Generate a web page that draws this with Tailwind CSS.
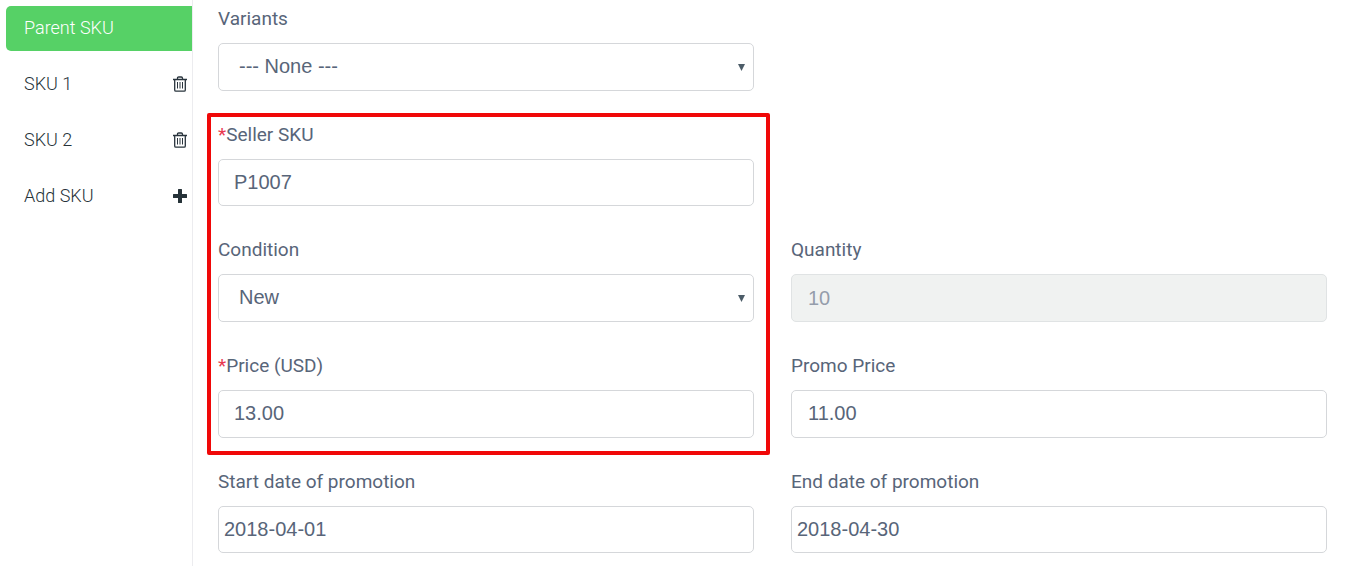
<!DOCTYPE html>
<html lang="en">
<head>
<meta charset="utf-8">
<meta name="viewport" content="width=device-width, initial-scale=1">
<title>SKU editor</title>
<script src="https://cdn.jsdelivr.net/npm/@tailwindcss/browser@4"></script>
</head>
<body class="flex min-h-screen bg-white font-['Roboto',sans-serif] text-[19px] leading-6 text-[#586579]">
<nav aria-label="SKUs" class="flex w-[193px] shrink-0 flex-col gap-[11px] border-r border-[#ececef] pt-1.5 pl-1.5 text-[18px] font-light text-[#263238]">
  <button type="button" class="flex h-[45px] items-center rounded-l-[5px] bg-[#56d166] pb-0.5 pl-[18px] text-white">Parent SKU</button>
  <div class="flex h-[45px] items-center justify-between pr-[5px] pb-0.5 pl-[18px]">
    <button type="button">SKU 1</button>
    <button type="button" aria-label="Delete SKU 1">
      <svg class="h-4 w-3.5" viewBox="0 0 14 16" fill="none" stroke="#29343d" stroke-width="1.3"><path d="M0 3.5H14M4.5 3.5V2.2Q4.5 1 5.7 1H8.3Q9.500 1 9.500 2.200V3.500M1.700 3.500V14Q1.700 15.200 2.900 15.200H11.100Q12.300 15.200 12.300 14V3.500"/><path d="M4.500 6V12.500M7 6V12.500M9.500 6V12.500" stroke-width="1"/></svg>
    </button>
  </div>
  <div class="flex h-[45px] items-center justify-between pr-[5px] pb-0.5 pl-[18px]">
    <button type="button">SKU 2</button>
    <button type="button" aria-label="Delete SKU 2">
      <svg class="h-4 w-3.5" viewBox="0 0 14 16" fill="none" stroke="#29343d" stroke-width="1.3"><path d="M0 3.5H14M4.5 3.5V2.2Q4.5 1 5.7 1H8.3Q9.500 1 9.500 2.200V3.500M1.700 3.500V14Q1.700 15.200 2.900 15.200H11.100Q12.300 15.200 12.300 14V3.500"/><path d="M4.500 6V12.500M7 6V12.500M9.500 6V12.500" stroke-width="1"/></svg>
    </button>
  </div>
  <button type="button" class="flex h-[45px] items-center justify-between pr-[5px] pb-0.5 pl-[18px]">
    Add SKU
    <svg class="h-3.5 w-3.5" viewBox="0 0 14 14" fill="#263238"><path d="M5.600 0H8.400Q9 0 9 .6V5H13.400Q14 5 14 5.600V8.400Q14 9 13.400 9H9V13.400Q9 14 8.400 14H5.600Q5 14 5 13.400V9H.6Q0 9 0 8.400V5.600Q0 5 .6 5H5V.6Q5 0 5.600 0Z"/></svg>
  </button>
</nav>
<form class="flex min-w-0 flex-1 flex-col gap-8 pt-[7px] pr-[18px] pl-[25px]">
  <div class="grid grid-cols-2 gap-x-[37px]">
    <div class="flex flex-col gap-3">
      <label for="variants">Variants</label>
      <div class="grid items-center">
        <select id="variants" class="col-start-1 row-start-1 h-12 w-full appearance-none rounded-[5px] border border-[#d5d7da] bg-white px-5 pb-0.5 font-['Liberation_Sans',sans-serif] text-[20px]"><option>--- None ---</option></select>
        <svg class="pointer-events-none col-start-1 row-start-1 mr-[9px] h-[7px] w-[7px] justify-self-end" viewBox="0 0 7 7" fill="#4c5c68"><path d="M0 0H7L3.500 7Z"/></svg>
      </div>
    </div>
  </div>
  <div class="grid grid-cols-2 gap-x-[37px] gap-y-8">
    <div class="col-start-1 row-start-1 flex flex-col gap-3">
      <label for="seller"><span class="text-[#e8384f]">*</span>Seller SKU</label>
      <input id="seller" type="text" value="P1007" class="h-[47px] w-full rounded-[5px] border border-[#d5d7da] px-[15px] font-['Liberation_Sans',sans-serif] text-[20px]">
    </div>
    <div class="col-start-1 row-start-2 flex flex-col gap-3">
      <label for="condition">Condition</label>
      <div class="grid items-center">
        <select id="condition" class="col-start-1 row-start-1 h-12 w-full appearance-none rounded-[5px] border border-[#d5d7da] bg-white px-5 pb-0.5 font-['Liberation_Sans',sans-serif] text-[20px]"><option>New</option></select>
        <svg class="pointer-events-none col-start-1 row-start-1 mr-[9px] h-[7px] w-[7px] justify-self-end" viewBox="0 0 7 7" fill="#4c5c68"><path d="M0 0H7L3.500 7Z"/></svg>
      </div>
    </div>
    <div class="col-start-2 row-start-2 flex flex-col gap-3">
      <label for="quantity">Quantity</label>
      <input id="quantity" type="text" value="10" disabled class="h-12 w-full rounded-[5px] border border-[#e0e3e4] bg-[#f0f2f1] px-4 font-['Liberation_Sans',sans-serif] text-[20px] text-[#959dab]">
    </div>
    <div class="col-start-1 row-start-3 flex flex-col gap-3">
      <label for="price"><span class="text-[#e8384f]">*</span>Price (USD)</label>
      <input id="price" type="text" value="13.00" class="h-12 w-full rounded-[5px] border border-[#d5d7da] px-[15px] pb-0.5 font-['Liberation_Sans',sans-serif] text-[20px]">
    </div>
    <div class="col-start-2 row-start-3 flex flex-col gap-3">
      <label for="promo">Promo Price</label>
      <input id="promo" type="text" value="11.00" class="h-12 w-full rounded-[5px] border border-[#d5d7da] px-4 pb-0.5 font-['Liberation_Sans',sans-serif] text-[20px]">
    </div>
    <div aria-hidden="true" class="pointer-events-none col-start-1 row-span-3 row-start-1 -mt-[10px] -mr-4 -mb-[17px] -ml-[11px] rounded-[2px] border-4 border-[#f00808]"></div>
  </div>
  <div class="grid grid-cols-2 gap-x-[37px]">
    <div class="flex flex-col gap-3">
      <label for="start">Start date of promotion</label>
      <input id="start" type="text" value="2018-04-01" class="h-[47px] w-full rounded-[5px] border border-[#d5d7da] px-[5px] font-['Liberation_Sans',sans-serif] text-[20px]">
    </div>
    <div class="flex flex-col gap-3">
      <label for="end">End date of promotion</label>
      <input id="end" type="text" value="2018-04-30" class="h-[47px] w-full rounded-[5px] border border-[#d5d7da] px-[5px] font-['Liberation_Sans',sans-serif] text-[20px]">
    </div>
  </div>
</form>
</body>
</html>
